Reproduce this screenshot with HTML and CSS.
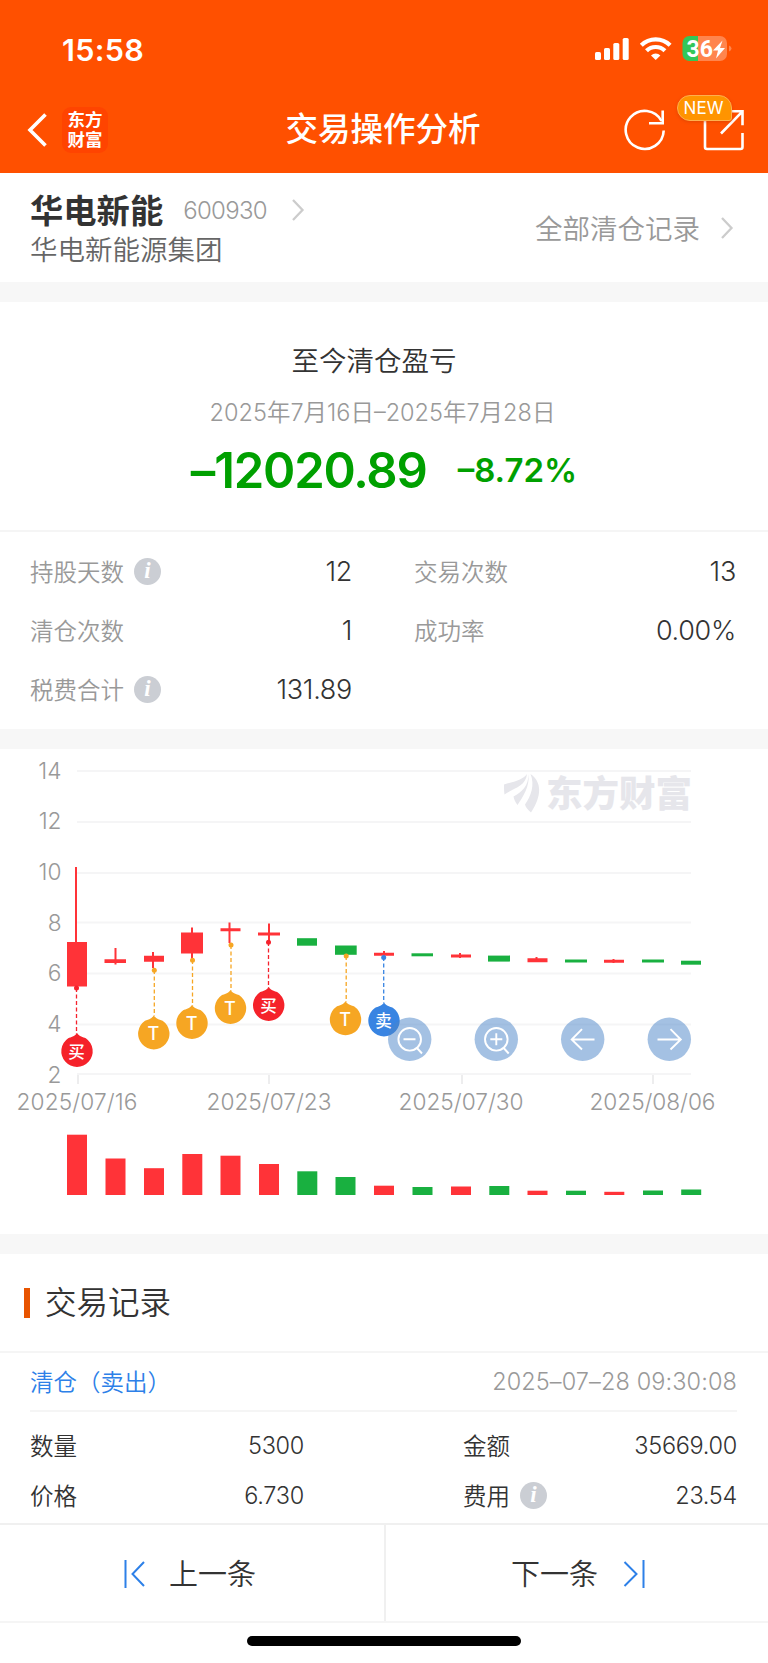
FILE: index.html
```html
<!DOCTYPE html>
<html lang="zh-CN">
<head>
  <meta charset="UTF-8">
  <meta name="viewport" content="width=device-width, initial-scale=1.0">
  <title>交易操作分析</title>
  <link rel="stylesheet" href="styles.css">
</head>
<body>
  <header class="header">
    <div class="status-bar">
      <span class="time">15:58</span>
      <svg class="status-icons" width="140" height="30" viewBox="0 0 140 30">
        <g fill="#fff">
          <rect x="3" y="18" width="6" height="8" rx="1.6"/>
          <rect x="12" y="14" width="6" height="12" rx="1.6"/>
          <rect x="21.3" y="9" width="6" height="17" rx="1.6"/>
          <rect x="30.7" y="4" width="6" height="22" rx="1.6"/>
        </g>
        <g fill="none" stroke="#fff" stroke-width="4.2">
          <path d="M49.3 11.2a20.5 20.5 0 0 1 28.8 0"/>
          <path d="M54.5 16.8a13 13 0 0 1 18.4 0"/>
        </g>
        <path d="M63.7 26l-4.7-4.6a6.8 6.8 0 0 1 9.4 0z" fill="#fff"/>
        <path d="M97.5 2H106v25h-8.500a7 7 0 0 1-7-7V9a7 7 0 0 1 7-7z" fill="#34c759"/>
        <path d="M106 2h22a7 7 0 0 1 7 7v11a7 7 0 0 1-7 7h-22z" fill="#ff854d"/>
        <path d="M137 11.500q2.500.8 2.500 3t-2.500 3z" fill="#ff854d"/>
        <text class="battery-text" x="94.500" y="22.700">36</text>
        <path d="M130.500 6.500l-9.500 10h5l-2 8 9-10.500h-5z" fill="#fff"/>
      </svg>
    </div>
    <div class="nav-bar">
      <div class="nav-left">
        <svg width="24" height="40" viewBox="0 0 24 40"><path d="M20.500 4.500L5 20l15.500 15.500" fill="none" stroke="#fff" stroke-width="3.600"/></svg>
        <div class="logo"><span>东方</span><span>财富</span></div>
      </div>
      <h1 class="title">交易操作分析</h1>
      <div class="nav-right">
        <svg width="44" height="44" viewBox="0 0 44 44" fill="none" stroke="#fff" stroke-width="2.6">
          <path d="M40.700 22.500A19 19 0 1 1 38.500 13"/>
          <path d="M39.700 2.500v12.700H26"/>
        </svg>
        <div class="share">
          <svg width="44" height="44" viewBox="0 0 44 44" fill="none" stroke="#fff" stroke-width="2.600">
            <path d="M3 10v29a2 2 0 0 0 2 2h33.500a2 2 0 0 0 2-2V25"/>
            <path d="M24 3.300h16.500v14M40.500 3.300L19 25.500"/>
          </svg>
          <span class="badge">NEW</span>
        </div>
      </div>
    </div>
  </header>

  <section class="stock">
    <div class="stock-info">
      <div class="stock-name">
        <b>华电新能</b>
        <span class="code">600930</span>
        <svg width="14" height="24" viewBox="0 0 14 24"><path d="M2 2l9.500 10L2 22" fill="none" stroke="#ccc" stroke-width="2.300"/></svg>
      </div>
      <div class="stock-company">华电新能源集团</div>
    </div>
    <div class="all-records">
      <span>全部清仓记录</span>
      <svg width="14" height="24" viewBox="0 0 14 24"><path d="M2 2l9.500 10L2 22" fill="none" stroke="#ccc" stroke-width="2.300"/></svg>
    </div>
  </section>

  <section class="profit">
    <div class="profit-title">至今清仓盈亏</div>
    <div class="profit-date">2025年7月16日–2025年7月28日</div>
    <div class="profit-value"><span class="amount">–12020.89</span><span class="percent">–8.72%</span></div>
  </section>

  <section class="stats">
    <div class="stat"><span class="label">持股天数</span><i class="info">i</i><span class="value">12</span></div>
    <div class="stat"><span class="label">交易次数</span><span class="value">13</span></div>
    <div class="stat"><span class="label">清仓次数</span><span class="value">1</span></div>
    <div class="stat"><span class="label">成功率</span><span class="value">0.00%</span></div>
    <div class="stat"><span class="label">税费合计</span><i class="info">i</i><span class="value">131.89</span></div>
  </section>

  <section class="chart">
    <svg width="768" height="485" viewBox="0 749 768 485">
      <defs>
        <path id="pin" d="M0 -18C2.500 -14.500 6 -13.800 8.800 -12.800A15.700 15.700 0 1 1 -8.800 -12.800C-6 -13.800 -2.500 -14.500 0 -18Z"/>
      </defs>

      <!-- grid -->
      <g stroke="#f5f5f6" stroke-width="2">
        <path d="M77 771H691M77 822H691M77 873H691M77 922.500H691M77 973.500H691M77 1024.500H691M77 1074H691"/>
        <path stroke="#ededee" d="M78 1075V1084M269 1075V1084M462 1075V1084M653 1075V1084"/>
      </g>
      <g class="axis" text-anchor="end">
        <text x="61.500" y="778.500">14</text>
        <text x="61.500" y="829.200">12</text>
        <text x="61.500" y="880">10</text>
        <text x="61.500" y="930.700">8</text>
        <text x="61.500" y="981">6</text>
        <text x="61.500" y="1032">4</text>
        <text x="61.500" y="1082.500">2</text>
      </g>
      <g class="axis">
        <text x="16.500" y="1109.500" textLength="121">2025/07/16</text>
        <text x="206.500" y="1109.500" textLength="125">2025/07/23</text>
        <text x="398.500" y="1109.500" textLength="125">2025/07/30</text>
        <text x="589.500" y="1109.500" textLength="126">2025/08/06</text>
      </g>

      <!-- watermark -->
      <g fill="#e6e6eb">
        <path d="M504 784.500C514 781.500 523 780 527 774C526 786 514 788 504.500 794.500C504 791 504 788 504 784.500Z"/>
        <path d="M528.500 774C530 786 523 797 517.500 805C515 802 514 799 513.500 796.500C522 792 528.500 786 528.500 774Z"/>
        <path d="M530.500 774C542 782 542 796 531 812.500C528 809.500 525.500 807.500 525 804.500C531 796 535 785 530.500 774Z"/>
        <text class="watermark" x="546" y="806.500" textLength="146">东方财富</text>
      </g>

      <!-- candles -->
      <g fill="#ff3338">
        <path d="M75 867h2v76h-2zM67 942h20v44.500H67z"/>
        <path d="M114.500 948h2v16.500h-2zM104.500 959.200h21.500v3.800h-21.500z"/>
        <path d="M152 952h2v16h-2zM144 955.700h20v6h-20z"/>
        <path d="M191 927.500h2v31h-2zM181 932.500h22v21h-22z"/>
        <path d="M228.500 922.500h2v20.500h-2zM220.500 928.300h20v3h-20z"/>
        <path d="M268 923.500h2v19h-2zM258 932.600h22v3h-22z"/>
        <path d="M383 951h2v6h-2zM374 952.700h20v3h-20z"/>
        <path d="M459 953h2v5h-2zM451 954.500h20v3h-20z"/>
        <path d="M535.500 957h2v4h-2zM527.500 958.300h20v4h-20z"/>
        <path d="M612.500 959h2v4h-2zM604 959.700h20v3h-20z"/>
      </g>
      <g fill="#19b040">
        <path d="M297 938.200h20v7.500h-20z"/>
        <path d="M335 945.500h21.700v9.300H335z"/>
        <path d="M411.500 953.300h21.500v3h-21.500z"/>
        <path d="M488 955.600h22v6h-22z"/>
        <path d="M565 959.500h22v3h-22z"/>
        <path d="M642 959.500h22v3h-22z"/>
        <path d="M681 960.700h20v4h-20z"/>
      </g>

      <!-- trade points -->
      <g stroke-width="1.300" stroke-dasharray="4 2.500">
        <path stroke="#f5222d" d="M76.500 988V1034M268.500 942V988"/>
        <path stroke="#f6a623" d="M154.300 970V1016M192.500 960V1006M231 945V991M346.200 956V1002"/>
        <path stroke="#3884e2" d="M383.700 957V1003"/>
      </g>
      <g fill="#f5222d"><circle cx="76.500" cy="988" r="2.500"/><circle cx="268.500" cy="942.300" r="2.500"/></g>
      <g fill="#f6a623"><circle cx="154.300" cy="970.200" r="2.500"/><circle cx="192.500" cy="960.200" r="2.500"/><circle cx="231" cy="945" r="2.500"/><circle cx="346.200" cy="956" r="2.500"/></g>
      <circle cx="383.700" cy="957.500" r="2.500" fill="#3884e2"/>
      <g class="pins">
        <use href="#pin" x="77" y="1051" fill="#f5222a"/><text x="76.500" y="1057.500">买</text>
        <use href="#pin" x="153.800" y="1033.500" fill="#f6a623"/><text class="t" x="153.300" y="1040">T</text>
        <use href="#pin" x="192" y="1023" fill="#f6a623"/><text class="t" x="191.700" y="1030">T</text>
        <use href="#pin" x="230.500" y="1008" fill="#f6a623"/><text class="t" x="230" y="1014.800">T</text>
        <use href="#pin" x="268.700" y="1005" fill="#f5222a"/><text x="268.500" y="1012">买</text>
        <use href="#pin" x="345.500" y="1019.300" fill="#f6a623"/><text class="t" x="345.200" y="1026">T</text>
        <use href="#pin" x="384" y="1020.500" fill="#3884e2"/><text x="383.500" y="1027">卖</text>
      </g>

      <!-- chart controls -->
      <g fill="#4a84c8" fill-opacity="0.500">
        <circle cx="409.700" cy="1039.300" r="21.700"/>
        <circle cx="496.300" cy="1039.300" r="21.700"/>
        <circle cx="582.700" cy="1039.300" r="21.700"/>
        <circle cx="669.300" cy="1039.300" r="21.700"/>
      </g>
      <g fill="none" stroke="#fff" stroke-width="1.900">
        <circle cx="409.700" cy="1039.300" r="11.300"/>
        <path d="M403.500 1039.300h12M416.500 1047.500l5.500 6"/>
        <circle cx="496.300" cy="1039.300" r="11.300"/>
        <path d="M490.300 1039.300h12M496.300 1033.300v12M503.200 1047.500l5.500 6"/>
        <path d="M594.500 1039.500h-22.500M582 1029.200l-10.300 10.300 10.300 10"/>
        <path d="M657.500 1039.500H680M670.500 1029.200l10.300 10.300-10.300 10"/>
      </g>

      <!-- volume -->
      <g fill="#ff3338">
        <rect x="67" y="1134.700" width="20" height="60.300"/>
        <rect x="105.500" y="1158.500" width="20" height="36.500"/>
        <rect x="144" y="1168.200" width="20" height="26.800"/>
        <rect x="182.300" y="1154" width="20" height="41"/>
        <rect x="220.500" y="1155.700" width="20" height="39.300"/>
        <rect x="259" y="1164" width="20" height="31"/>
        <rect x="374" y="1185.700" width="20" height="9.300"/>
        <rect x="451" y="1186.500" width="20" height="8.500"/>
        <rect x="527.500" y="1190.700" width="20" height="4.300"/>
        <rect x="604.300" y="1191.800" width="20" height="3.200"/>
      </g>
      <g fill="#19b040">
        <rect x="297.300" y="1171.300" width="20" height="23.700"/>
        <rect x="335.500" y="1177" width="20" height="18"/>
        <rect x="412.500" y="1187" width="20" height="8"/>
        <rect x="489.300" y="1186" width="20" height="9"/>
        <rect x="566" y="1190.700" width="20" height="4.300"/>
        <rect x="643" y="1190.500" width="20" height="4.500"/>
        <rect x="681.200" y="1189.500" width="20" height="5.500"/>
      </g>
    </svg>
  </section>

  <section class="records">
    <h2 class="records-title"><span>交易记录</span></h2>
    <div class="record">
      <div class="record-head"><span class="type">清仓（卖出）</span><span class="datetime">2025–07–28 09:30:08</span></div>
      <div class="record-body">
        <div class="cell"><span class="name">数量</span><span class="num">5300</span></div>
        <div class="cell"><span class="name">金额</span><span class="num">35669.00</span></div>
        <div class="cell"><span class="name">价格</span><span class="num">6.730</span></div>
        <div class="cell"><span class="name">费用</span><i class="info">i</i><span class="num">23.54</span></div>
      </div>
    </div>
  </section>

  <footer class="pager">
    <div class="page-btn prev">
      <svg width="22" height="30" viewBox="0 0 22 30" fill="none" stroke="#2d80e8" stroke-width="2"><path d="M2.500 1v28M21 3L9.500 15 21 27"/></svg>
      <span>上一条</span>
    </div>
    <div class="page-btn next">
      <span>下一条</span>
      <svg width="22" height="30" viewBox="0 0 22 30" fill="none" stroke="#2d80e8" stroke-width="2"><path d="M20.500 1v28M1.500 3L13.500 15 1.500 27"/></svg>
    </div>
  </footer>
  <div class="home-indicator"></div>
</body>
</html>
```
FILE: styles.css
```css
* {
  box-sizing: border-box;
}

body {
  margin: 0;
  width: 768px;
  height: 1663px;
  overflow: hidden;
  background: #fff;
  color: #333;
  font-family: Inter, "Noto Sans CJK SC", sans-serif;
  font-weight: 350;
}

svg {
  display: block;
  flex: none;
}

/* header */
.header {
  height: 173px;
  background: #ff5000;
  color: #fff;
}

.status-bar {
  height: 88px;
  padding: 34px 36px 0 62px;
  display: flex;
  justify-content: space-between;
}

.time {
  font-size: 30.5px;
  line-height: 31px;
  font-weight: 600;
  letter-spacing: 0.3px;
}

.battery-text {
  font-family: Roboto, sans-serif;
  font-size: 23px;
  font-weight: 700;
  fill: #fff;
}

.nav-bar {
  height: 85px;
  padding: 0 22px 2px 25px;
  display: grid;
  grid-template-columns: 1fr auto 1fr;
  align-items: center;
}

.nav-left {
  display: flex;
  align-items: center;
  gap: 13px;
}

.logo {
  width: 46px;
  height: 46px;
  padding-top: 3px;
  border-radius: 9px;
  background: #ff4400;
  display: flex;
  flex-direction: column;
  align-items: center;
  font-size: 17.5px;
  line-height: 20px;
  font-weight: 600;
}

.title {
  margin: 0;
  padding-right: 5px;
  font-size: 32.5px;
  line-height: 44px;
  font-weight: 500;
}

.nav-right {
  display: flex;
  justify-content: flex-end;
  gap: 35px;
}

.share {
  position: relative;
}

.badge {
  position: absolute;
  left: -25px;
  top: -13px;
  width: 55px;
  height: 26px;
  padding-right: 2px;
  border: 1px solid #ffb04d;
  border-radius: 13px 13px 3px 13px;
  background: #ff9400;
  box-shadow: 0 1px 3px rgba(200, 60, 0, 0.5);
  font-size: 17px;
  line-height: 24px;
  font-weight: 400;
  text-align: center;
}

/* stock */
.stock {
  height: 129px;
  padding: 13px 34px 0 30px;
  border-bottom: 20px solid #f7f7f7;
  display: flex;
  justify-content: space-between;
}

.stock-name {
  height: 48px;
  display: flex;
  align-items: center;
}

.stock-name b {
  padding-bottom: 4px;
  font-size: 33.3px;
  font-weight: 700;
}

.code {
  margin: 0 24px 0 20px;
  font-size: 24px;
  letter-spacing: -0.7px;
  color: #999;
}

.stock-company {
  font-size: 27.5px;
  line-height: 32px;
  color: #666;
}

.all-records {
  height: 84px;
  display: flex;
  align-items: center;
  gap: 20px;
  font-size: 27.5px;
  color: #999;
}

.all-records span {
  padding-bottom: 3px;
}

/* profit */
.profit {
  height: 230px;
  padding-top: 38px;
  border-bottom: 2px solid #f5f5f5;
  text-align: center;
}

.profit-title {
  font-size: 27.5px;
  line-height: 42px;
  padding-right: 20px;
}

.profit-date {
  margin-top: 14px;
  font-size: 23.5px;
  line-height: 34px;
  color: #999;
  padding-right: 3px;
}

.profit-value {
  display: flex;
  justify-content: center;
  align-items: center;
  gap: 31px;
  height: 80px;
  color: #00a000;
  font-weight: 600;
}

.amount {
  font-size: 49px;
  letter-spacing: -1.2px;
}

.percent {
  font-size: 33px;
  letter-spacing: 0;
}

/* stats */
.stats {
  height: 217px;
  padding: 10px 32px 0 30px;
  border-bottom: 20px solid #f7f7f7;
  display: grid;
  grid-template-columns: 322px 322px;
  grid-auto-rows: 59px;
  column-gap: 62px;
}

.stat {
  display: flex;
  align-items: center;
}

.label {
  padding-bottom: 2px;
  font-size: 23.5px;
  color: #999;
}

.value {
  margin-left: auto;
  font-size: 27px;
  letter-spacing: -0.3px;
}

.info {
  width: 27px;
  height: 27px;
  margin-left: 10px;
  border-radius: 50%;
  background: #cbced4;
  color: #fff;
  font: italic bold 23px/26px "Liberation Serif", serif;
  text-align: center;
}

/* chart */
.chart {
  height: 505px;
  border-bottom: 20px solid #f7f7f7;
}

.axis text {
  font-size: 22.7px;
  fill: #999;
}

.watermark {
  font-size: 36.5px;
  font-weight: 900;
}

.pins text {
  font-size: 16.5px;
  font-weight: 500;
  text-anchor: middle;
  fill: #fff;
}

.pins .t {
  font-size: 18px;
}

/* records */
.records-title {
  height: 99px;
  margin: 0;
  padding: 1px 0 0 24px;
  border-bottom: 2px solid #f5f5f5;
  display: flex;
  align-items: center;
  font-size: 31.5px;
  font-weight: 350;
}

.records-title::before {
  content: "";
  width: 6px;
  height: 30px;
  margin-right: 15px;
  background: #e85400;
}

.records-title span {
  padding-bottom: 6px;
}

.record {
  padding: 0 31px 0 30px;
  font-size: 23.5px;
}

.record-head {
  height: 59px;
  border-bottom: 2px solid #f5f5f5;
  display: flex;
  justify-content: space-between;
  align-items: center;
}

.type {
  padding-bottom: 2px;
  color: #2d80e8;
}

.datetime {
  letter-spacing: 0.1px;
  color: #999;
}

.record-body {
  height: 111px;
  padding-top: 8px;
  display: grid;
  grid-template-columns: 274px 274px;
  grid-auto-rows: 50px;
  justify-content: space-between;
}

.cell {
  display: flex;
  align-items: center;
}

.name {
  padding-bottom: 1px;
}

.num {
  margin-left: auto;
  letter-spacing: -0.3px;
}

/* pager */
.pager {
  height: 100px;
  border-top: 2px solid #f0f0f0;
  border-bottom: 2px solid #f5f5f5;
  display: grid;
  grid-template-columns: 386px 1fr;
}

.page-btn {
  padding-top: 1px;
  display: flex;
  align-items: center;
  font-size: 29px;
}

.page-btn span {
  padding-bottom: 3px;
}

.prev {
  padding-left: 123px;
  gap: 24px;
  border-right: 2px solid #f0f0f0;
}

.next {
  padding-left: 125px;
  gap: 25px;
}

.home-indicator {
  width: 274px;
  height: 10px;
  margin: 13px auto 0;
  border-radius: 5px;
  background: #000;
}
```
